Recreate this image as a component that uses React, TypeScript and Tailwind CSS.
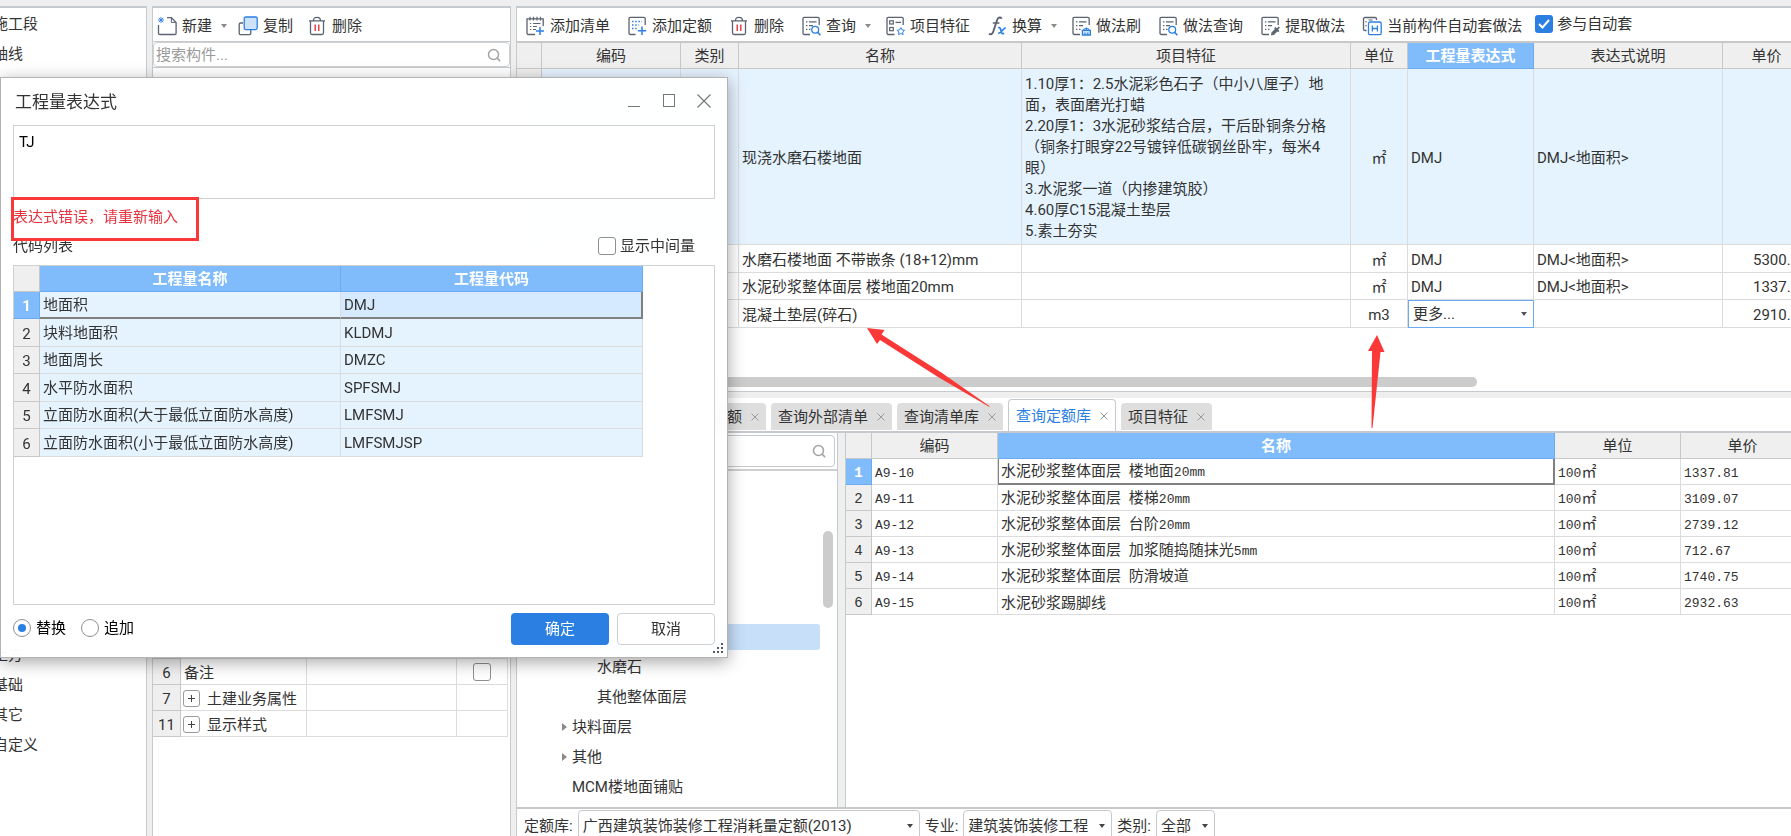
import React from "react";

const DARK = "#5b6270";
const BLUE = "#2b7fe3";

function Svg({ children }: { children: React.ReactNode }) {
  return (
    <svg className="h-5 w-5 shrink-0" viewBox="0 0 20 20" fill="none" stroke={DARK} strokeWidth="1.3" aria-hidden="true">
      {children}
    </svg>
  );
}

function NewIcon() {
  return (
    <Svg>
      <path d="M1.500 9v8.200c0 .8.500 1.300 1.300 1.300h15c.8 0 1.300-.5 1.300-1.300V6.500L14.400 1.600H10" />
      <path d="M14.400 1.800v4.600h4.400" strokeWidth="1" />
      <path d="M4 1v6M1 4h6M1.800 1.800l4.400 4.400M6.200 1.800L1.800 6.200" stroke={BLUE} strokeWidth=".9" />
    </Svg>
  );
}

function CopyIcon() {
  return (
    <Svg>
      <path d="M5 7H2.600C1.700 7 1.200 7.500 1.200 8.300v9c0 .8.500 1.300 1.300 1.300h9c.8 0 1.300-.5 1.300-1.300V14" />
      <rect x="6.200" y="1" width="13" height="12.600" rx="1.500" fill="#cfe2fb" stroke={BLUE} />
    </Svg>
  );
}

function TrashIcon() {
  return (
    <Svg>
      <path d="M2 4.800h16M6.500 4.500c0-2 1-3.200 3.500-3.200s3.500 1.200 3.500 3.200M3.500 5v12c0 1 .5 1.500 1.500 1.500h10c1 0 1.500-.5 1.500-1.500V5" />
      <path d="M8.200 8.500v6.500M11.800 8.500v6.500" stroke="#e5343c" strokeWidth="1.400" />
    </Svg>
  );
}

function AddListIcon() {
  return (
    <Svg>
      <path d="M10 18.500H3.300c-.8 0-1.300-.5-1.300-1.300V2.800h16.200V10" />
      <path d="M5 .8v3.600M8.500.8v3.600M12 .8v3.600M15.500.8v3.600" strokeWidth="1.200" />
      <path d="M5 7.500h1.200M8 7.500h7.500M5 10.500h1.200M8 10.500h4M5 13.500h1.200M8 13.500h3" strokeWidth="1.200" />
      <path d="M15 11v8M11 15h8" stroke={BLUE} strokeWidth="1.500" />
    </Svg>
  );
}

function AddQuotaIcon() {
  return (
    <Svg>
      <path d="M8.500 18.500H3.300c-.8 0-1.300-.5-1.300-1.300V2.600c0-.8.500-1.300 1.300-1.300h13.600c.8 0 1.300.5 1.300 1.300V9" />
      <path d="M5 5.500h10M5 9h7M5 12.500h5" stroke={BLUE} strokeDasharray="1.500 1.700" />
      <path d="M15 10.500v8.500M10.800 14.700h8.400" stroke={BLUE} strokeWidth="1.500" />
    </Svg>
  );
}

function Sheet() {
  return (
    <>
      <path d="M9 18.500H3.300c-.8 0-1.300-.5-1.300-1.300V2.600c0-.8.500-1.300 1.300-1.300h13.600c.8 0 1.300.5 1.300 1.300V9" />
      <path d="M5 5.800h1.400M8 5.800h7.500M5 9.600h1.400M8 9.600h4M5 13.400h1.400M8 13.400h1.500" strokeWidth="1.200" />
    </>
  );
}

function QueryIcon() {
  return (
    <Svg>
      <Sheet />
      <circle cx="14.200" cy="13.800" r="3.400" stroke={BLUE} />
      <path d="M16.600 16.400l2.800 2.800" stroke={BLUE} strokeWidth="1.500" />
    </Svg>
  );
}

function FeatureIcon() {
  return (
    <Svg>
      <path d="M9.500 18.500H3.300c-.8 0-1.300-.5-1.300-1.300V2.600c0-.8.500-1.300 1.300-1.300h13.600c.8 0 1.300.5 1.300 1.300V9" />
      <rect x="4.700" y="4.800" width="3.600" height="3.200" strokeWidth="1.200" />
      <rect x="4.700" y="11.500" width="3.600" height="3.200" strokeWidth="1.200" />
      <path d="M10.500 6.400h5.500" strokeWidth="1.300" />
      <path d="M15.800 11.600l1.200 2.300 2.500.4-1.800 1.800.4 2.500-2.300-1.100-2.300 1.100.4-2.500-1.800-1.800 2.500-.4z" stroke={BLUE} strokeWidth="1" />
    </Svg>
  );
}

function BrushIcon() {
  return (
    <Svg>
      <Sheet />
      <path d="M11.400 19v-4.600h8V19zM15.400 14.400v-3" stroke={BLUE} strokeWidth="1.300" fill="#cfe2fb" />
      <path d="M14 19v-2.600M16.800 19v-2.600" stroke={BLUE} strokeWidth="1.100" />
      <path d="M12.500 14c.5-2 5.300-2 5.800 0" stroke={BLUE} strokeWidth="1.200" />
    </Svg>
  );
}

function ExtractIcon() {
  return (
    <Svg>
      <Sheet />
      <path d="M11.400 19l.6-2.600 3.800-3.800 2 2-3.800 3.800z" fill={DARK} strokeWidth=".8" />
      <path d="M14.800 11.600l4 4M17 13.600l2.200-2.600" strokeWidth="1.800" />
    </Svg>
  );
}

function AutoIcon() {
  return (
    <Svg>
      <path d="M4.500 14.500H3c-1 0-1.500-.5-1.500-1.500V3c0-1 .5-1.500 1.500-1.500h10c1 0 1.500.5 1.500 1.500v1" />
      <path d="M4 5v1.500M4 9v1.500M6.500 4h4" strokeWidth="1.100" />
      <rect x="6.500" y="6" width="12.700" height="12.700" rx="1.500" stroke={BLUE} />
      <path d="M10.300 9.500v6M15.400 9.500v6M10.300 12.500h5.100" stroke={BLUE} />
    </Svg>
  );
}

function FxIcon() {
  return (
    <Svg>
      <path d="M14.600 2.800C14 .9 11.200.9 10.100 4L6.300 15.500c-.8 2.600-2.700 3.500-4.300 2.200" strokeWidth="1.900" />
      <path d="M5.800 7h6.600" strokeWidth="1.500" />
      <path d="M11.200 11.800c2-.8 2.200.6 2.700 2.800.5 2.300 1.100 3.800 3.200 2.600M18.800 11.800c-2.500-.3-4.200 5.800-7.700 5.600" stroke={BLUE} strokeWidth="1.700" />
    </Svg>
  );
}

function Caret() {
  return (
    <svg className="ml-2 -mr-3 h-2 w-4 shrink-0 text-[#8a8a8a]" viewBox="0 0 16 8" fill="currentColor" aria-hidden="true">
      <path d="M1 2h6L4 6z" />
    </svg>
  );
}

function Tool({ icon, label, caret }: { icon: React.ReactNode; label: string; caret?: boolean }) {
  return (
    <button type="button" className="flex shrink-0 items-center whitespace-nowrap">
      {icon}
      <span className="ml-[5px]">{label}</span>
      {caret && <Caret />}
    </button>
  );
}

function SearchIcon() {
  return (
    <svg className="h-4 w-4 shrink-0" viewBox="0 0 16 16" fill="none" stroke="#a3a3a3" strokeWidth="1.500" aria-hidden="true">
      <circle cx="7.500" cy="7.500" r="5" />
      <path d="M11.100 11.100l3 3" />
    </svg>
  );
}

const HEAD = "h-[26px] border-r border-b border-[#c8c8c8] bg-[#efefef] p-0 text-center font-normal";
const HEAD_ON = "h-[26px] border-r border-b border-[#6aabf2] bg-[#80bbfb] p-0 text-center font-bold text-white";
const CELL = "border-r border-b border-[#dcdcdc] pt-[2px] pr-0 pb-0 pl-[3px]";
const CENTER_CELL = "border-r border-b border-[#dcdcdc] px-0 pt-[2px] pb-0 text-center";
const CODE_CELL = "border-r border-b border-[#dcdcdc] py-0 pr-0 pl-[3px]";
const NUM = "border-r border-b border-[#c8c8c8] bg-[#efefef] px-0 pt-[2px] pb-0 text-center font-normal";
const NUM_ON = "border-r border-b border-[#6aabf2] bg-[#80bbfb] px-0 pt-[2px] pb-0 text-center font-bold text-white";

const features = [
  "1.10厚1：2.5水泥彩色石子（中小八厘子）地",
  "面，表面磨光打蜡",
  "2.20厚1：3水泥砂浆结合层，干后卧铜条分格",
  "（铜条打眼穿22号镀锌低碳钢丝卧牢，每米4",
  "眼）",
  "3.水泥浆一道（内掺建筑胶）",
  "4.60厚C15混凝土垫层",
  "5.素土夯实",
];

function ItemsTable() {
  return (
    <table className="w-[calc(100%+20px)] table-fixed border-separate border-spacing-0">
      <colgroup>
        <col className="w-[25px]" />
        <col className="w-[139px]" />
        <col className="w-[58px]" />
        <col className="w-[283px]" />
        <col className="w-[329px]" />
        <col className="w-[57px]" />
        <col className="w-[126px]" />
        <col />
        <col className="w-[88px]" />
      </colgroup>
      <thead>
        <tr>
          <th className={HEAD}></th>
          <th className={HEAD}>编码</th>
          <th className={HEAD}>类别</th>
          <th className={HEAD}>名称</th>
          <th className={HEAD}>项目特征</th>
          <th className={HEAD}>单位</th>
          <th className={HEAD_ON}>工程量表达式</th>
          <th className={HEAD}>表达式说明</th>
          <th className={HEAD}>单价</th>
        </tr>
      </thead>
      <tbody>
        <tr className="h-44 bg-[#e5f3ff]">
          <td className={NUM}></td>
          <td className={CELL}></td>
          <td className={CELL}></td>
          <td className={CELL}>现浇水磨石楼地面</td>
          <td className={CELL}>
            <div className="leading-[21px] whitespace-nowrap">
              {features.map((line) => (
                <div key={line}>{line}</div>
              ))}
            </div>
          </td>
          <td className={CENTER_CELL}>㎡</td>
          <td className={CELL}>DMJ</td>
          <td className={CELL}>DMJ&lt;地面积&gt;</td>
          <td className={CELL}></td>
        </tr>
        {[
          ["水磨石楼地面 不带嵌条 (18+12)mm", "㎡", "DMJ", "DMJ<地面积>", "5300."],
          ["水泥砂浆整体面层 楼地面20mm", "㎡", "DMJ", "DMJ<地面积>", "1337."],
          ["混凝土垫层(碎石)", "m3", "", "", "2910."],
        ].map((r) => (
          <tr key={r[0]} className="odd:h-[27px] even:h-7">
            <td className={NUM}></td>
            <td className={CELL}></td>
            <td className={CELL}></td>
            <td className={CELL}>{r[0]}</td>
            <td className={CELL}></td>
            <td className={CENTER_CELL}>{r[1]}</td>
            {r[2] ? (
              <td className={CELL}>{r[2]}</td>
            ) : (
              <td className="p-0">
                <div className="grid items-center">
                  <select aria-label="工程量表达式" className="col-start-1 row-start-1 h-7 w-full appearance-none border border-[#6aabf2] bg-white pl-1">
                    <option>更多...</option>
                  </select>
                  <svg className="pointer-events-none col-start-1 row-start-1 mr-[6px] h-2 w-2 justify-self-end" viewBox="0 0 8 8" fill="#555" aria-hidden="true">
                    <path d="M1 2h6L4 6z" />
                  </svg>
                </div>
              </td>
            )}
            <td className={CELL}>{r[3]}</td>
            <td className="border-r border-b border-[#dcdcdc] pt-[2px] pr-0 pb-0 pl-[30px]">{r[4]}</td>
          </tr>
        ))}
      </tbody>
    </table>
  );
}

/* Latin runs are set in a narrow monospaced face beside the CJK glyphs. */
function Mixed({ text }: { text: string }) {
  return (
    <>
      {text.split(/([\x20-\x7e]+)/).map((part, i) =>
        /^[\x20-\x7e]/.test(part) ? (
          <span key={i} className="font-['Liberation_Mono',monospace] text-[13px]">
            {part}
          </span>
        ) : (
          part
        ),
      )}
    </>
  );
}

const quotas = [
  ["A9-10", "水泥砂浆整体面层 楼地面20mm", "1337.81"],
  ["A9-11", "水泥砂浆整体面层 楼梯20mm", "3109.07"],
  ["A9-12", "水泥砂浆整体面层 台阶20mm", "2739.12"],
  ["A9-13", "水泥砂浆整体面层 加浆随捣随抹光5mm", "712.67"],
  ["A9-14", "水泥砂浆整体面层 防滑坡道", "1740.75"],
  ["A9-15", "水泥砂浆踢脚线", "2932.63"],
];

function QuotaTable() {
  return (
    <table className="w-[calc(100%+14px)] table-fixed border-separate border-spacing-0">
      <colgroup>
        <col className="w-[26px]" />
        <col className="w-[126px]" />
        <col />
        <col className="w-[126px]" />
        <col className="w-[124px]" />
      </colgroup>
      <thead>
        <tr>
          <th className={HEAD}></th>
          <th className={HEAD}>编码</th>
          <th className={HEAD_ON}>名称</th>
          <th className={HEAD}>单位</th>
          <th className={HEAD}>单价</th>
        </tr>
      </thead>
      <tbody className="leading-5">
        {quotas.map((q, i) => (
          <tr key={q[0]} className="h-[26px]">
            <th className={i === 0 ? NUM_ON : NUM}>
              <span className="font-['Liberation_Mono',monospace] text-[14px]">{i + 1}</span>
            </th>
            <td className={CELL}>
              <Mixed text={q[0]} />
            </td>
            <td className={i === 0 ? "border-r-2 border-b-2 border-l border-[#808080] pt-[2px] pr-0 pb-0 pl-[2px]" : CELL}>
              <Mixed text={q[1]} />
            </td>
            <td className={CELL}>
              <Mixed text="100㎡" />
            </td>
            <td className={CELL}>
              <Mixed text={q[2]} />
            </td>
          </tr>
        ))}
      </tbody>
    </table>
  );
}

const codes = [
  ["地面积", "DMJ"],
  ["块料地面积", "KLDMJ"],
  ["地面周长", "DMZC"],
  ["水平防水面积", "SPFSMJ"],
  ["立面防水面积(大于最低立面防水高度)", "LMFSMJ"],
  ["立面防水面积(小于最低立面防水高度)", "LMFSMJSP"],
];

function Dialog() {
  return (
    <section
      role="dialog"
      aria-label="工程量表达式"
      className="absolute top-[77px] left-0 flex h-[581px] w-[728px] flex-col border border-[#b4b4b4] bg-white/95 px-3 shadow-[0_4px_16px_rgba(0,0,0,0.35)] backdrop-blur-md"
    >
      <header className="flex h-[47px] shrink-0 items-center justify-between">
        <h2 className="pl-[2px] text-[17px]">工程量表达式</h2>
        <div className="-mr-[6px] flex pb-[2px] text-[#777]">
          <button type="button" aria-label="最小化" className="flex w-[35px] justify-center">
            <svg className="h-4 w-4" viewBox="0 0 16 16" fill="none" stroke="currentColor">
              <path d="M2 13.500h12" />
            </svg>
          </button>
          <button type="button" aria-label="最大化" className="flex w-[35px] justify-center">
            <svg className="h-4 w-4" viewBox="0 0 16 16" fill="none" stroke="currentColor">
              <rect x="2.500" y="1.500" width="11" height="12" />
            </svg>
          </button>
          <button type="button" aria-label="关闭" className="flex w-[35px] justify-center">
            <svg className="h-4 w-4" viewBox="0 0 16 16" fill="none" stroke="currentColor" strokeWidth="1.200">
              <path d="M1.500 1.500l13 13M14.500 1.500l-13 13" />
            </svg>
          </button>
        </div>
      </header>
      <textarea
        aria-label="表达式"
        defaultValue="TJ"
        className="h-[74px] shrink-0 resize-none border border-[#d0d0d0] bg-white px-[5px] py-[5px] leading-[22px] text-black"
      />
      <div className="relative flex h-9 shrink-0 items-center text-[#e8333f]">
        <p role="alert">表达式错误，请重新输入</p>
        <div className="pointer-events-none absolute -top-[2px] -left-[2px] h-[44px] w-[188px] border-[3px] border-[#fb3838]" />
      </div>
      <div className="flex h-[22px] shrink-0 items-center justify-between pr-5">
        <span>代码列表</span>
        <label className="flex items-center gap-1">
          <input type="checkbox" className="h-[18px] w-[18px] shrink-0 appearance-none rounded-[3px] border border-[#8f8f8f] bg-white" />
          显示中间量
        </label>
      </div>
      <div className="mt-2 min-h-0 flex-1 border border-[#d0d0d0] bg-white">
        <table className="w-[629px] table-fixed border-separate border-spacing-0">
          <colgroup>
            <col className="w-[26px]" />
            <col />
            <col className="w-[302px]" />
          </colgroup>
          <thead>
            <tr>
              <th className={HEAD}></th>
              <th className={HEAD_ON}>工程量名称</th>
              <th className={HEAD_ON}>工程量代码</th>
            </tr>
          </thead>
          <tbody className="bg-[#e5f3ff]">
            {codes.map(([name, code], i) => (
              <tr key={code} className="odd:h-[27px] even:h-7">
                <th className={i === 0 ? NUM_ON : NUM}>{i + 1}</th>
                <td className={i === 0 ? "border-r border-b-2 border-r-[#dcdcdc] border-b-[#808080] py-0 pr-0 pl-[3px]" : CODE_CELL}>{name}</td>
                <td className={i === 0 ? "border-r-2 border-b-2 border-[#808080] bg-[#d5eaff] py-0 pr-0 pl-[3px]" : CODE_CELL}>{code}</td>
              </tr>
            ))}
          </tbody>
        </table>
      </div>
      <footer className="flex h-[52px] shrink-0 items-start justify-between pt-2">
        <div className="flex h-[30px] items-center gap-[15px] text-black">
          {["替换", "追加"].map((mode, i) => (
            <label key={mode} className="flex items-center gap-[5px]">
              <input
                type="radio"
                name="mode"
                defaultChecked={i === 0}
                className="grid h-[18px] w-[18px] appearance-none place-content-center rounded-full border border-[#8f8f8f] bg-white before:h-2 before:w-2 before:rounded-full checked:before:bg-[#2b7fe3]"
              />
              {mode}
            </label>
          ))}
        </div>
        <div className="flex gap-2">
          <button type="button" className="h-8 w-[98px] rounded-[4px] bg-[#2b7fe3] text-white">
            确定
          </button>
          <button type="button" className="h-8 w-[98px] rounded-[4px] border border-[#d0d0d0] bg-white">
            取消
          </button>
        </div>
      </footer>
      <svg className="absolute right-1 bottom-1 h-[10px] w-[10px]" viewBox="0 0 10 10" fill="#555b66" aria-hidden="true">
        <path d="M8 0h2v2H8zM4 4h2v2H4zM8 4h2v2H8zM0 8h2v2H0zM4 8h2v2H4zM8 8h2v2H8z" />
      </svg>
    </section>
  );
}

function Tab({ label, active }: { label: string; active?: boolean }) {
  return (
    <div
      className={
        active
          ? "flex h-8 shrink-0 items-center gap-[9px] rounded-t-[4px] border border-b-0 border-[#c5cacf] bg-white px-[7px] text-[#2b7fe3]"
          : "mb-px flex h-[27px] shrink-0 items-center gap-[9px] rounded-t-[4px] bg-[#dedede] px-[7px]"
      }
    >
      <button type="button" className="whitespace-nowrap">{label}</button>
      <button type="button" aria-label={"关闭" + label}>
        <svg className="h-2 w-2" viewBox="0 0 8 8" fill="none" stroke="#9a9a9a" aria-hidden="true">
          <path d="M.5.5l7 7M7.500.5l-7 7" />
        </svg>
      </button>
    </div>
  );
}

function Picker({ label, value, wide }: { label: string; value: string; wide?: boolean }) {
  return (
    <label className="flex shrink-0 items-center gap-[5px] whitespace-nowrap">
      {label}
      <span className="grid items-center">
        <select
          className={
            wide
              ? "col-start-1 row-start-1 h-8 w-[342px] appearance-none rounded-[4px] border border-[#c5cacf] bg-white pl-1"
              : "col-start-1 row-start-1 h-8 appearance-none rounded-[4px] border border-[#c5cacf] bg-white pr-[22px] pl-1"
          }
        >
          <option>{value}</option>
        </select>
        <svg className="pointer-events-none col-start-1 row-start-1 mr-[6px] h-2 w-2 justify-self-end" viewBox="0 0 8 8" fill="#444" aria-hidden="true">
          <path d="M1 2h6L4 6z" />
        </svg>
      </span>
    </label>
  );
}

function Tree() {
  const arrow = (
    <svg className="h-2 w-[5px] shrink-0" viewBox="0 0 5 8" fill="#8a8a8a" aria-hidden="true">
      <path d="M0 0l5 4-5 4z" />
    </svg>
  );
  return (
    <div className="relative min-h-0 flex-1 overflow-hidden border-t-2 border-[#cfcfcf] bg-white pt-[151px]">
      <ul>
        <li className="flex h-[30px] items-center px-[17px]">
          <span className="h-[26px] flex-1 rounded-[3px] bg-[#c8dffa]" />
        </li>
        <li className="flex h-[30px] items-center pl-20">水磨石</li>
        <li className="flex h-[30px] items-center pl-20">其他整体面层</li>
        <li className="flex h-[30px] items-center gap-[5px] pl-[45px]">{arrow}块料面层</li>
        <li className="flex h-[30px] items-center gap-[5px] pl-[45px]">{arrow}其他</li>
        <li className="flex h-[30px] items-center pl-[55px]">MCM楼地面铺贴</li>
      </ul>
      <div className="absolute top-[60px] right-1 h-[77px] w-[10px] rounded-full bg-[#cccccc]" />
    </div>
  );
}

function PropertyTable() {
  const plus = (
    <button type="button" aria-label="展开" className="mr-[7px] flex h-[17px] w-[17px] shrink-0 items-center justify-center rounded-[3px] border border-[#9a9a9a] bg-white">
      <svg className="h-[7px] w-[7px]" viewBox="0 0 7 7" stroke="#444" aria-hidden="true">
        <path d="M0 3.500h7M3.500 0v7" />
      </svg>
    </button>
  );
  return (
    <table className="w-full table-fixed border-separate border-spacing-0">
      <colgroup>
        <col className="w-7" />
        <col className="w-[126px]" />
        <col />
        <col className="w-[51px]" />
      </colgroup>
      <tbody>
        {[1, 2, 3, 4, 5].map((n) => (
          <tr key={n} className="h-[26px]">
            <th className={NUM}></th>
            <td className={CELL}></td>
            <td className={CELL}></td>
            <td className={CELL}></td>
          </tr>
        ))}
        <tr className="h-[26px]">
          <th className={NUM}>6</th>
          <td className={CELL}>备注</td>
          <td className={CELL}></td>
          <td className="border-r border-b border-[#dcdcdc] p-0">
            <input type="checkbox" aria-label="备注" className="mx-auto block h-[18px] w-[18px] appearance-none rounded-[3px] border border-[#8f8f8f] bg-white" />
          </td>
        </tr>
        {[
          ["7", "土建业务属性"],
          ["11", "显示样式"],
        ].map(([n, label]) => (
          <tr key={n} className="h-[26px]">
            <th className={NUM}>{n}</th>
            <td className="border-r border-b border-[#dcdcdc] pt-[2px] pr-0 pb-0 pl-[2px]">
              <div className="flex items-center whitespace-nowrap">
                {plus}
                {label}
              </div>
            </td>
            <td className={CELL}></td>
            <td className={CELL}></td>
          </tr>
        ))}
      </tbody>
    </table>
  );
}

export default function App() {
  return (
    <div className="relative flex h-screen gap-[5px] overflow-hidden bg-[#efefef] pt-[6px] font-['Roboto','Noto_Sans_CJK_SC',sans-serif] text-[15px] leading-[22px] text-[#333]">
      <nav className="flex w-[147px] shrink-0 flex-col justify-between overflow-hidden border-t-2 border-r border-[#c5cacf] bg-white pb-[76px]">
        <ul className="-ml-[7px] pt-px">
          <li className="flex h-[30px] items-center">施工段</li>
          <li className="flex h-[30px] items-center">轴线</li>
        </ul>
        <ul className="-ml-[7px]">
          <li className="flex h-[30px] items-center">土方</li>
          <li className="flex h-[30px] items-center">基础</li>
          <li className="flex h-[30px] items-center">其它</li>
          <li className="flex h-[30px] items-center">自定义</li>
        </ul>
      </nav>

      <aside className="flex w-[359px] shrink-0 flex-col border-x border-t-2 border-[#c5cacf] bg-white">
        <div className="flex h-[34px] shrink-0 items-center gap-[14px] border-b border-[#c5cacf] pt-[2px] pl-1">
          <Tool icon={<NewIcon />} label="新建" caret />
          <Tool icon={<CopyIcon />} label="复制" />
          <Tool icon={<TrashIcon />} label="删除" />
        </div>
        <label className="flex h-[25px] shrink-0 items-center rounded-[4px] border border-[#d0d0d0] pr-[7px] pl-[2px]">
          <input type="text" aria-label="搜索构件" placeholder="搜索构件..." className="min-w-0 flex-1 outline-none placeholder:text-[#9a9a9a]" />
          <SearchIcon />
        </label>
        <div className="h-[462px] shrink-0 border-y border-[#c5cacf]" />
        <div className="pr-[2px]">
          <PropertyTable />
        </div>
      </aside>

      <main className="flex min-w-0 flex-1 flex-col border-t-2 border-l border-[#c5cacf]">
        <div className="flex h-[384px] shrink-0 flex-col overflow-hidden border-b border-[#c5cacf] bg-white">
          <div className="flex h-[35px] shrink-0 items-center gap-[17px] border-b-2 border-[#c8c8c8] pt-[2px] pl-2">
            <Tool icon={<AddListIcon />} label="添加清单" />
            <Tool icon={<AddQuotaIcon />} label="添加定额" />
            <Tool icon={<TrashIcon />} label="删除" />
            <Tool icon={<QueryIcon />} label="查询" caret />
            <Tool icon={<FeatureIcon />} label="项目特征" />
            <Tool icon={<FxIcon />} label="换算" caret />
            <Tool icon={<BrushIcon />} label="做法刷" />
            <Tool icon={<QueryIcon />} label="做法查询" />
            <Tool icon={<ExtractIcon />} label="提取做法" />
            <Tool icon={<AutoIcon />} label="当前构件自动套做法" />
            <label className="-ml-1 flex shrink-0 items-center gap-1 pb-1 whitespace-nowrap">
              <span className="grid place-items-center">
                <input type="checkbox" defaultChecked className="col-start-1 row-start-1 h-[18px] w-[18px] appearance-none rounded-[3px] bg-[#2b7fe3]" />
                <svg className="pointer-events-none col-start-1 row-start-1 h-3 w-3" viewBox="0 0 12 12" fill="none" stroke="#fff" strokeWidth="2" aria-hidden="true">
                  <path d="M1 6l3.500 3.500L11 2" />
                </svg>
              </span>
              参与自动套
            </label>
          </div>
          <div className="min-h-0 flex-1 overflow-hidden">
            <ItemsTable />
          </div>
          <div className="mb-1 ml-1 h-[10px] w-3/4 shrink-0 rounded-full bg-[#cccccc]" />
        </div>

        <div className="mt-[6px] flex h-[35px] shrink-0 items-end gap-[5px] overflow-hidden border-b-2 border-[#c5c8cc] bg-white pl-[158px]">
          <Tab label="查询定额" />
          <Tab label="查询外部清单" />
          <Tab label="查询清单库" />
          <Tab label="查询定额库" active />
          <Tab label="项目特征" />
        </div>

        <div className="flex min-h-0 flex-1 gap-[7px]">
          <div className="flex w-[321px] shrink-0 flex-col border-r border-[#c5cacf] bg-white">
            <label className="mx-[2px] my-[2px] flex h-8 shrink-0 items-center rounded-[4px] border border-[#c5cacf] pr-[7px] pl-2">
              <input type="text" aria-label="搜索" className="min-w-0 flex-1 outline-none" />
              <SearchIcon />
            </label>
            <Tree />
          </div>
          <div className="min-w-0 flex-1 overflow-hidden border-l border-[#c5cacf] bg-white">
            <QuotaTable />
          </div>
        </div>

        <div className="flex h-[29px] shrink-0 items-start gap-[5px] overflow-hidden border-t-2 border-[#c8c8c8] bg-white pt-px pl-[7px]">
          <Picker label="定额库:" value="广西建筑装饰装修工程消耗量定额(2013)" wide />
          <Picker label="专业:" value="建筑装饰装修工程" />
          <Picker label="类别:" value="全部" />
        </div>
      </main>

      <Dialog />

      <svg className="pointer-events-none absolute top-[327px] left-[866px] h-20 w-[125px]" viewBox="0 0 125 80" fill="#fb3838" aria-hidden="true">
        <path d="M1 1l17.500 2-3 4.500L76 46l48 33.500-1 .3L72 50 14 13l-3 4z" />
      </svg>
      <svg className="pointer-events-none absolute top-[335px] left-[1367px] h-[94px] w-[18px]" viewBox="0 0 18 94" fill="#fb3838" aria-hidden="true">
        <path d="M10 0l7.500 17h-4L5.500 93h-1l.5-77H1z" />
      </svg>
    </div>
  );
}
